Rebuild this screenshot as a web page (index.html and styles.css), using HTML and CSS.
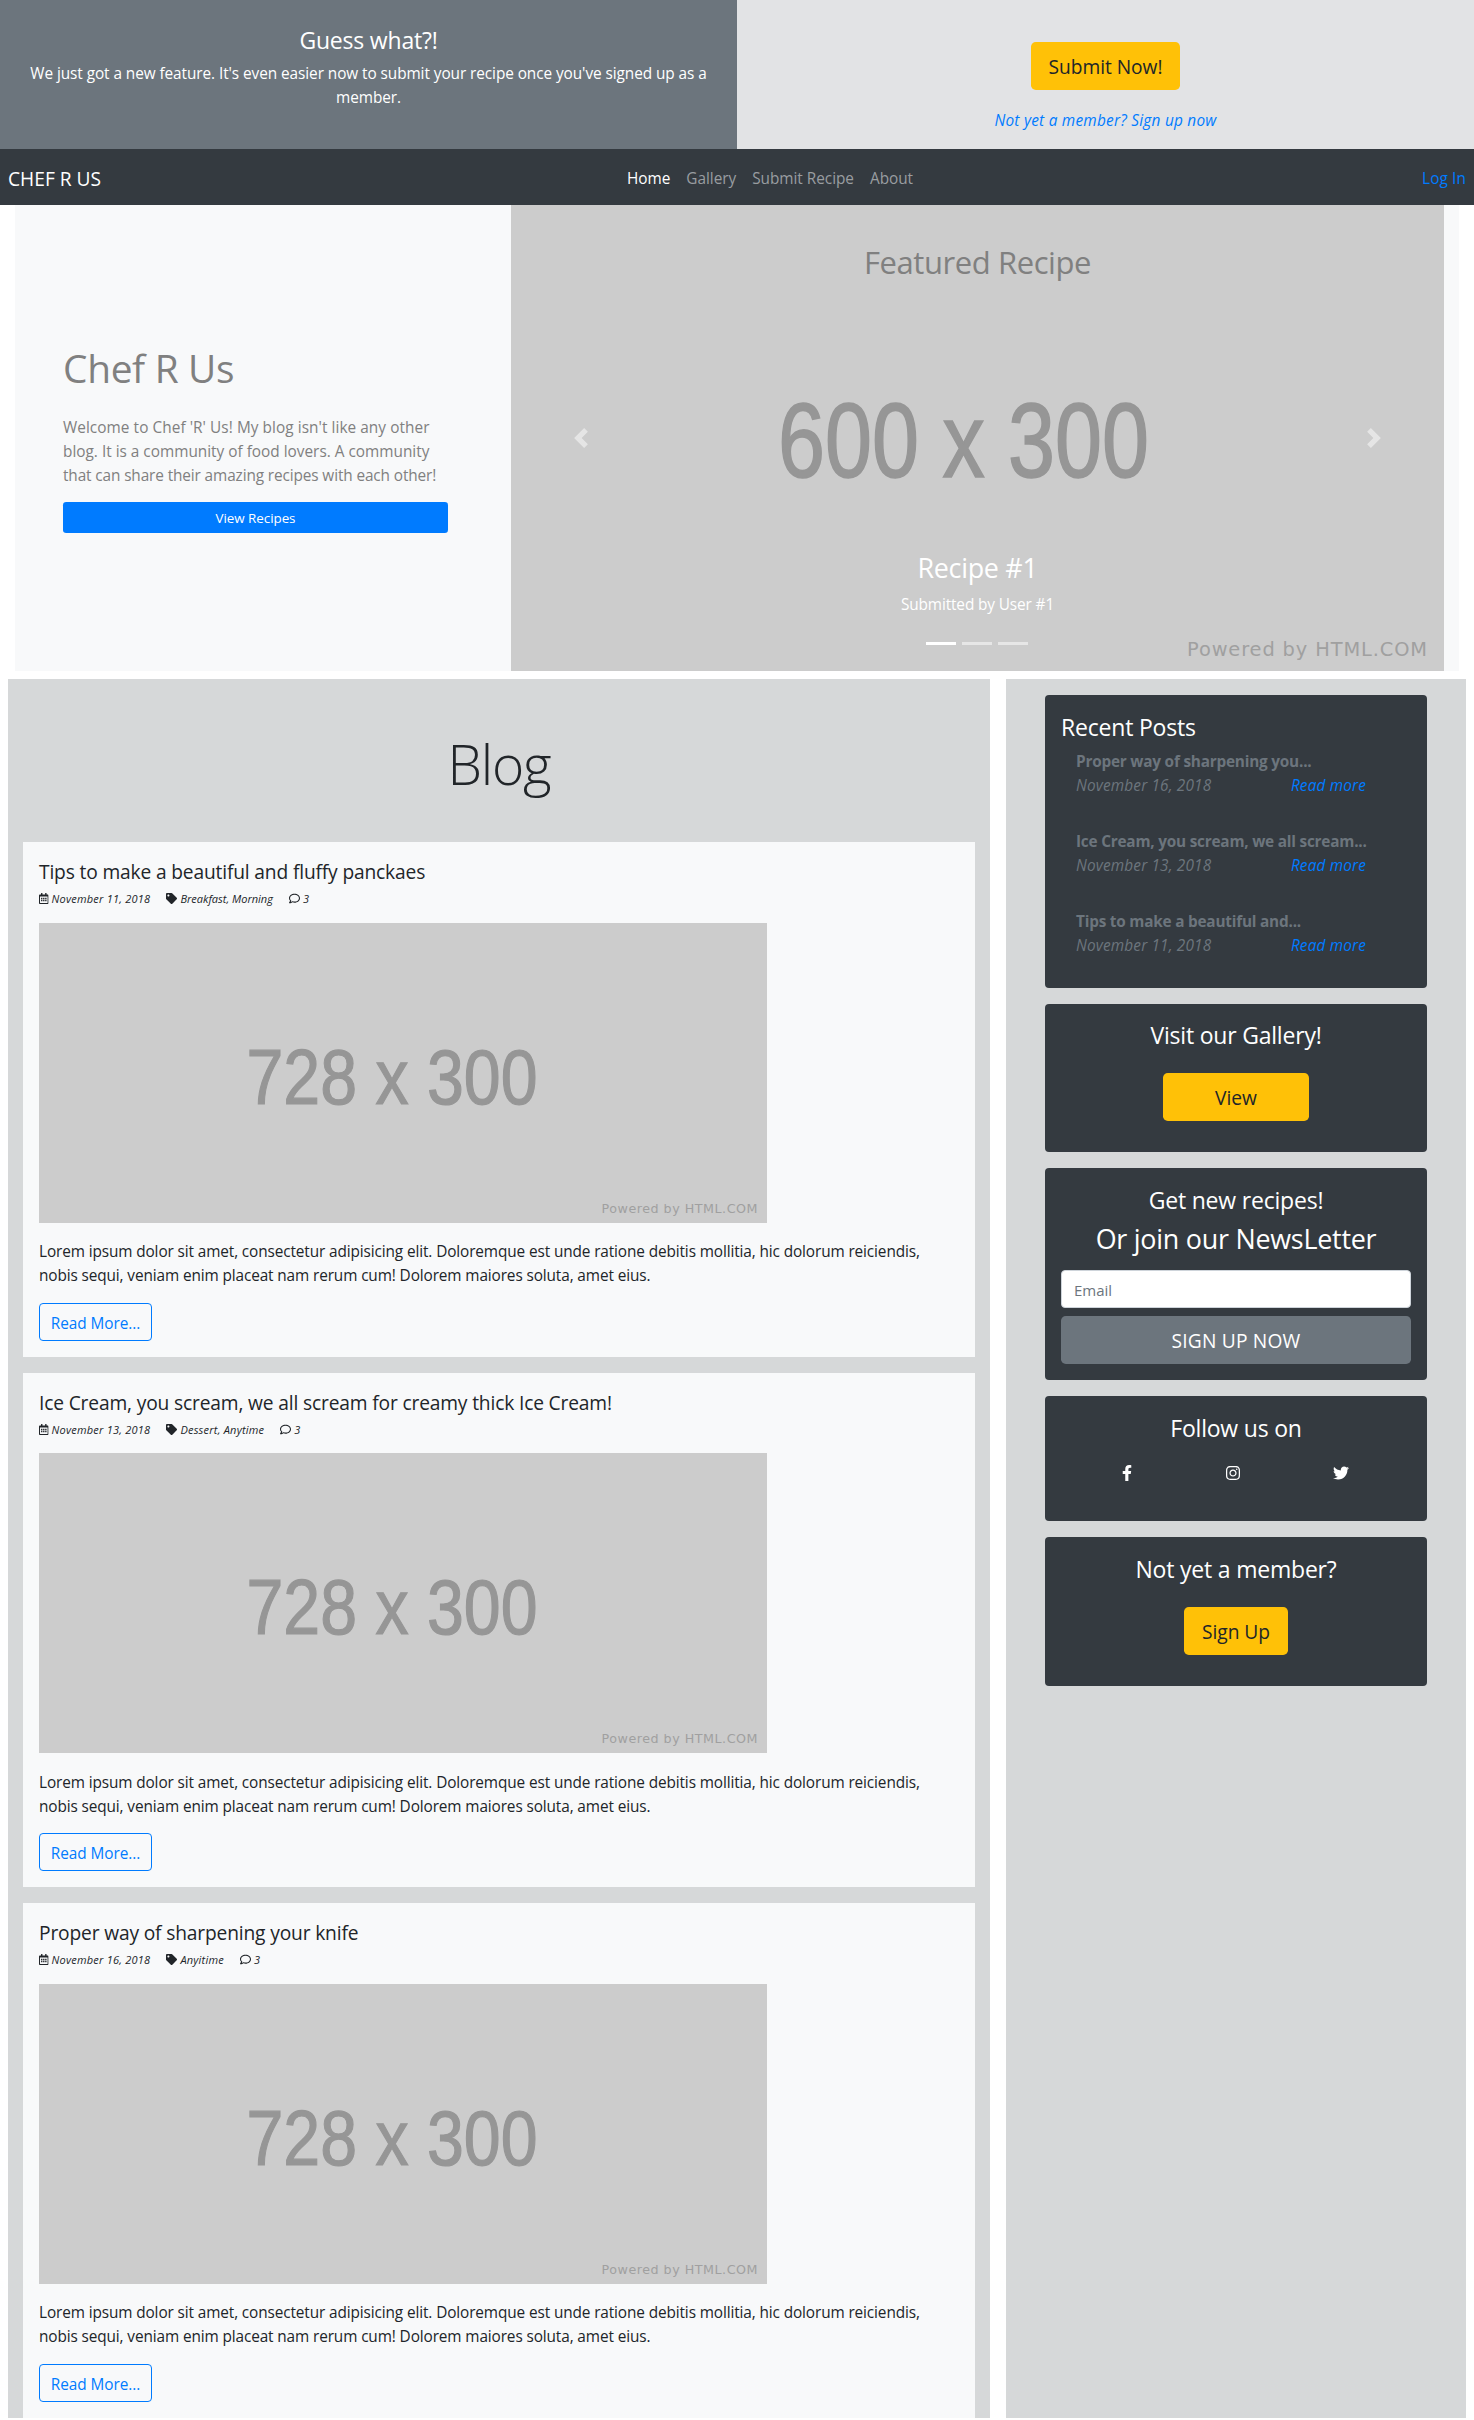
FILE: index.html
```
<!DOCTYPE html>
<html lang="en">
<head>
<meta charset="utf-8">
<title>Chef R Us</title>
<link rel="stylesheet" href="styles.css">
</head>
<body>
<svg class="sprite" aria-hidden="true">
  <symbol id="calendar" viewBox="0 0 448 512"><path d="M148 288h-40c-6.600 0-12-5.400-12-12v-40c0-6.600 5.400-12 12-12h40c6.600 0 12 5.400 12 12v40c0 6.600-5.400 12-12 12zm108-12v-40c0-6.600-5.400-12-12-12h-40c-6.600 0-12 5.400-12 12v40c0 6.600 5.400 12 12 12h40c6.600 0 12-5.400 12-12zm96 0v-40c0-6.600-5.400-12-12-12h-40c-6.600 0-12 5.400-12 12v40c0 6.600 5.400 12 12 12h40c6.600 0 12-5.400 12-12zm-96 96v-40c0-6.600-5.400-12-12-12h-40c-6.600 0-12 5.400-12 12v40c0 6.600 5.400 12 12 12h40c6.600 0 12-5.400 12-12zm-96 0v-40c0-6.600-5.400-12-12-12h-40c-6.600 0-12 5.400-12 12v40c0 6.600 5.400 12 12 12h40c6.600 0 12-5.400 12-12zm192 0v-40c0-6.600-5.400-12-12-12h-40c-6.600 0-12 5.400-12 12v40c0 6.600 5.400 12 12 12h40c6.600 0 12-5.400 12-12zm96-260v352c0 26.500-21.500 48-48 48H48c-26.500 0-48-21.500-48-48V112c0-26.500 21.500-48 48-48h48V12c0-6.600 5.400-12 12-12h40c6.600 0 12 5.400 12 12v52h128V12c0-6.600 5.400-12 12-12h40c6.600 0 12 5.400 12 12v52h48c26.500 0 48 21.500 48 48zm-48 346V160H48v298c0 3.300 2.700 6 6 6h340c3.300 0 6-2.700 6-6z"/></symbol>
  <symbol id="tag" viewBox="0 0 512 512"><path d="M0 252.118V48C0 21.490 21.490 0 48 0h204.118a48 48 0 0 1 33.941 14.059l211.882 211.882c18.745 18.745 18.745 49.137 0 67.882L293.823 497.941c-18.745 18.745-49.137 18.745-67.882 0L14.059 286.059A48 48 0 0 1 0 252.118zM112 64c-26.510 0-48 21.490-48 48s21.490 48 48 48 48-21.490 48-48-21.490-48-48-48z"/></symbol>
  <symbol id="comment" viewBox="0 0 512 512"><path d="M256 32C114.600 32 0 125.100 0 240c0 47.600 19.900 91.200 52.900 126.300C38 405.700 7 439.100 6.500 439.500c-6.600 7-8.400 17.200-4.600 26S14.400 480 24 480c61.500 0 110-25.700 139.100-46.300C192 442.800 223.200 448 256 448c141.400 0 256-93.100 256-208S397.400 32 256 32zm0 368c-26.700 0-53.100-4.100-78.400-12.100l-22.700-7.200-19.500 13.800c-14.300 10.100-33.900 21.400-57.500 29 7.300-12.100 14.400-25.700 19.900-40.200l10.600-28.100-20.600-21.800C69.700 314.100 48 282.200 48 240c0-88.200 93.300-160 208-160s208 71.800 208 160-93.300 160-208 160z"/></symbol>
  <symbol id="facebook" viewBox="0 0 320 512"><path d="M279.140 288l14.220-92.660h-88.910v-60.130c0-25.350 12.420-50.060 52.240-50.060h40.420V6.260S260.430 0 225.360 0c-73.220 0-121.080 44.380-121.080 124.720v70.620H22.890V288h81.390v224h100.170V288z"/></symbol>
  <symbol id="instagram" viewBox="0 0 448 512"><path d="M224.100 141c-63.600 0-114.900 51.300-114.900 114.900s51.300 114.900 114.900 114.900S339 319.500 339 255.900 287.700 141 224.100 141zm0 189.600c-41.100 0-74.700-33.500-74.700-74.700s33.500-74.700 74.700-74.700 74.700 33.500 74.700 74.700-33.600 74.700-74.700 74.700zm146.400-194.300c0 14.900-12 26.800-26.800 26.800-14.900 0-26.800-12-26.800-26.800s12-26.800 26.800-26.800 26.800 12 26.800 26.800zm76.100 27.200c-1.700-35.900-9.900-67.700-36.200-93.900-26.200-26.200-58-34.400-93.900-36.200-37-2.100-147.900-2.100-184.900 0-35.800 1.700-67.600 9.900-93.900 36.100s-34.400 58-36.200 93.900c-2.100 37-2.100 147.900 0 184.900 1.700 35.900 9.900 67.700 36.200 93.900s58 34.400 93.900 36.200c37 2.100 147.900 2.100 184.900 0 35.900-1.700 67.700-9.900 93.900-36.200 26.200-26.200 34.400-58 36.200-93.900 2.100-37 2.100-147.800 0-184.800zM398.800 388c-7.800 19.600-22.900 34.700-42.600 42.600-29.500 11.700-99.500 9-132.100 9s-102.700 2.600-132.100-9c-19.600-7.800-34.700-22.900-42.600-42.600-11.700-29.500-9-99.500-9-132.100s-2.600-102.700 9-132.100c7.800-19.600 22.900-34.700 42.600-42.600 29.500-11.700 99.500-9 132.100-9s102.700-2.600 132.100 9c19.600 7.800 34.700 22.900 42.600 42.600 11.700 29.500 9 99.500 9 132.100s2.700 102.700-9 132.100z"/></symbol>
  <symbol id="twitter" viewBox="0 0 512 512"><path d="M459.370 151.716c.325 4.548.325 9.097.325 13.645 0 138.720-105.583 298.558-298.558 298.558-59.452 0-114.680-17.219-161.137-47.106 8.447.974 16.568 1.299 25.340 1.299 49.055 0 94.213-16.568 130.274-44.832-46.132-.975-84.792-31.188-98.112-72.772 6.498.974 12.995 1.624 19.818 1.624 9.421 0 18.843-1.300 27.614-3.573-48.081-9.747-84.143-51.980-84.143-102.985v-1.299c13.969 7.797 30.214 12.670 47.431 13.319-28.264-18.843-46.781-51.005-46.781-87.391 0-19.492 5.197-37.360 14.294-52.954 51.655 63.675 129.300 105.258 216.365 109.807-1.624-7.797-2.599-15.918-2.599-24.040 0-57.828 46.782-104.934 104.934-104.934 30.213 0 57.502 12.670 76.670 33.137 23.715-4.548 46.456-13.320 66.599-25.340-7.798 24.366-24.366 44.833-46.132 57.827 21.117-2.273 41.584-8.122 60.426-16.243-14.292 20.791-32.161 39.308-52.628 54.253z"/></symbol>
  <symbol id="placeholder" viewBox="0 0 728 300">
    <rect width="728" height="300" fill="#ccc"/>
    <text x="207.500" y="181" textLength="291" lengthAdjust="spacingAndGlyphs" class="ph-size">728 x 300</text>
    <text x="562.500" y="290" textLength="156" lengthAdjust="spacing" class="ph-credit">Powered by HTML.COM</text>
  </symbol>
</svg>

<header class="announce">
  <div class="announce-news">
    <h4>Guess what?!</h4>
    <p>We just got a new feature. It's even easier now to submit your recipe once you've signed up as a member.</p>
  </div>
  <div class="announce-action">
    <a class="btn btn-warning submit-btn">Submit Now!</a>
    <a class="signup-link">Not yet a member? Sign up now</a>
  </div>
</header>

<nav class="navbar">
  <a class="brand">CHEF R US</a>
  <div class="nav-links">
    <a class="active">Home</a><a>Gallery</a><a>Submit Recipe</a><a>About</a>
  </div>
  <a class="login">Log In</a>
</nav>

<section class="hero">
  <div class="intro">
    <h1>Chef R Us</h1>
    <p><span class="loose">Welcome to Chef 'R' Us! My blog isn't like any other</span><br><span class="even">blog. It is a community of food lovers. A community</span><br>that can share their amazing recipes with each other!</p>
    <a class="btn btn-primary">View Recipes</a>
  </div>
  <div class="carousel">
    <svg class="slide" viewBox="0 0 933 466">
      <rect width="933" height="466" fill="#ccc"/>
      <text x="267" y="272" textLength="371" lengthAdjust="spacingAndGlyphs" class="ph-size ph-size-lg">600 x 300</text>
      <text x="676" y="450.500" textLength="240" lengthAdjust="spacing" class="ph-credit ph-credit-lg">Powered by HTML.COM</text>
    </svg>
    <h2 class="featured">Featured Recipe</h2>
    <svg class="arrow arrow-prev" viewBox="0 0 8 8"><path d="M5.250 0l-4 4 4 4 1.500-1.500-2.500-2.500 2.500-2.500-1.500-1.500z"/></svg>
    <svg class="arrow arrow-next" viewBox="0 0 8 8"><path d="M2.750 0l-1.500 1.500 2.500 2.500-2.500 2.500 1.500 1.500 4-4-4-4z"/></svg>
    <div class="caption">
      <h3>Recipe #1</h3>
      <p>Submitted by User #1</p>
    </div>
    <div class="indicators"><i class="on"></i><i></i><i></i></div>
  </div>
</section>

<div class="columns">
  <main class="blog">
    <h1 class="blog-title">Blog</h1>
    <article class="post">
      <h5>Tips to make a beautiful and fluffy panckaes</h5>
      <div class="meta"><span><svg class="cal"><use href="#calendar"/></svg>November 11, 2018</span><span class="tight"><svg><use href="#tag"/></svg>Breakfast, Morning</span><span><svg><use href="#comment"/></svg>3</span></div>
      <svg class="photo" viewBox="0 0 728 300"><use href="#placeholder"/></svg>
      <p>Lorem ipsum dolor sit amet, consectetur adipisicing elit. Doloremque est unde ratione debitis mollitia, hic dolorum reiciendis,<br>nobis sequi, veniam enim placeat nam rerum cum! Dolorem maiores soluta, amet eius.</p>
      <a class="btn btn-outline">Read More...</a>
    </article>
    <article class="post">
      <h5>Ice Cream, you scream, we all scream for creamy thick Ice Cream!</h5>
      <div class="meta"><span><svg class="cal"><use href="#calendar"/></svg>November 13, 2018</span><span><svg><use href="#tag"/></svg>Dessert, Anytime</span><span><svg><use href="#comment"/></svg>3</span></div>
      <svg class="photo" viewBox="0 0 728 300"><use href="#placeholder"/></svg>
      <p>Lorem ipsum dolor sit amet, consectetur adipisicing elit. Doloremque est unde ratione debitis mollitia, hic dolorum reiciendis,<br>nobis sequi, veniam enim placeat nam rerum cum! Dolorem maiores soluta, amet eius.</p>
      <a class="btn btn-outline">Read More...</a>
    </article>
    <article class="post">
      <h5>Proper way of sharpening your knife</h5>
      <div class="meta"><span><svg class="cal"><use href="#calendar"/></svg>November 16, 2018</span><span><svg><use href="#tag"/></svg>Anyitime</span><span><svg><use href="#comment"/></svg>3</span></div>
      <svg class="photo" viewBox="0 0 728 300"><use href="#placeholder"/></svg>
      <p>Lorem ipsum dolor sit amet, consectetur adipisicing elit. Doloremque est unde ratione debitis mollitia, hic dolorum reiciendis,<br>nobis sequi, veniam enim placeat nam rerum cum! Dolorem maiores soluta, amet eius.</p>
      <a class="btn btn-outline">Read More...</a>
    </article>
  </main>

  <aside class="sidebar">
    <section class="panel recent">
      <h4>Recent Posts</h4>
      <div class="recent-item"><b>Proper way of sharpening you...</b><div><em>November 16, 2018</em><a>Read more</a></div></div>
      <div class="recent-item"><b>Ice Cream, you scream, we all scream...</b><div><em>November 13, 2018</em><a>Read more</a></div></div>
      <div class="recent-item"><b>Tips to make a beautiful and...</b><div><em>November 11, 2018</em><a>Read more</a></div></div>
    </section>
    <section class="panel center cta">
      <h4>Visit our Gallery!</h4>
      <a class="btn btn-warning view-btn">View</a>
    </section>
    <section class="panel center newsletter">
      <h4>Get new recipes!</h4>
      <h3>Or join our NewsLetter</h3>
      <input type="email" placeholder="Email">
      <a class="btn btn-secondary">SIGN UP NOW</a>
    </section>
    <section class="panel center">
      <h4>Follow us on</h4>
      <div class="social">
        <svg class="fb"><use href="#facebook"/></svg>
        <svg class="ig"><use href="#instagram"/></svg>
        <svg><use href="#twitter"/></svg>
      </div>
    </section>
    <section class="panel center cta">
      <h4>Not yet a member?</h4>
      <a class="btn btn-warning join-btn">Sign Up</a>
    </section>
  </aside>
</div>
</body>
</html>
```
FILE: styles.css
```
* { box-sizing: border-box; }
body {
  margin: 0;
  background: #fff;
  color: #212529;
  font: 15.36px/24px "Open Sans", "Noto Sans", sans-serif;
  letter-spacing: -.115px;
}
h1, h2, h3, h4, h5, p { margin: 0; font-weight: 400; }
h3 { padding-top: 1px; font-size: 26.9px; line-height: 33.6px; letter-spacing: -.25px; }
h4 { padding-top: 1.500px; font-size: 23px; line-height: 28.8px; letter-spacing: -.2px; }
h5 { padding-top: 2px; font-size: 19.2px; line-height: 24px; letter-spacing: -.155px; }
p { padding-top: 1.500px; }
.sprite { position: absolute; width: 0; height: 0; }

.btn {
  display: block;
  border-radius: 4.8px;
  font-size: 19.2px;
  line-height: 50px;
  height: 48px;
  letter-spacing: -.04px;
  text-align: center;
}
.btn-warning { background: #ffc107; color: #212529; }
.btn-primary { background: #007bff; color: #fff; height: 31px; line-height: 32px; font-size: 13.4px; border-radius: 3.2px; }
.btn-secondary { background: #6c757d; color: #fff; letter-spacing: .2px; }
.btn-outline {
  width: 113px;
  height: 38px;
  line-height: 39px;
  border: 1px solid #007bff;
  border-radius: 4px;
  color: #007bff;
  font-size: 15.36px;
}

/* announcement strip */
.announce { display: grid; grid-template-columns: 1fr 1fr; height: 149px; text-align: center; }
.announce-news { background: #6c757d; color: #fff; padding: 24px 28px 0; }
.announce-news h4 { margin-bottom: 6.500px; }
.announce-news p { letter-spacing: -.07px; }
.announce-action { background: #e2e3e5; padding-top: 42px; display: flex; flex-direction: column; align-items: center; }
.submit-btn { width: 149px; }
.signup-link { margin-top: 18.500px; color: #007bff; font-style: italic; letter-spacing: .24px; }

/* navigation */
.navbar {
  display: flex;
  align-items: center;
  justify-content: space-between;
  height: 56px;
  padding: 3px 8px 0;
  background: #343a40;
}
.brand { width: 94px; margin-right: 16px; color: #fff; font-size: 19.2px; line-height: 28px; white-space: nowrap; letter-spacing: 0; }
.nav-links { display: flex; gap: 16px; color: #999da0; letter-spacing: -.03px; }
.nav-links .active { color: #fff; }
.login { color: #007bff; letter-spacing: 0.1px; }

/* hero */
.hero { display: flex; height: 466px; margin: 0 15px 8px; background: #f8f9fa; }
.intro { width: 496px; padding: 0 63px 0 48px; display: flex; flex-direction: column; justify-content: center; color: #808080; }
.intro h1 { padding-top: 1px; margin-bottom: 22.500px; font-size: 38.8px; line-height: 48px; letter-spacing: -.3px; }
.intro p { margin-bottom: 14.500px; white-space: nowrap; }
.loose { letter-spacing: .06px; }
.even { letter-spacing: 0; }
.carousel { position: relative; width: 933px; color: #fff; text-align: center; }
.slide { display: block; width: 933px; height: 466px; }
.ph-size { font: 77px "Liberation Sans", Arial, sans-serif; fill: #969696; stroke: #969696; stroke-width: 1.200; letter-spacing: 0; }
.ph-size-lg { font-size: 106px; stroke-width: 1.600; }
.ph-credit { font: 12.7px "DejaVu Sans", sans-serif; fill: #a0a0a0; letter-spacing: 0; }
.ph-credit-lg { font-size: 19.4px; }
.featured { position: absolute; top: 38px; left: 0; right: 0; color: #808080; font-size: 31px; line-height: 38px; letter-spacing: -.42px; }
.arrow { position: absolute; top: 223px; width: 20px; height: 20px; fill: #fff; opacity: .5; }
.arrow-prev { left: 60px; }
.arrow-next { right: 60px; }
.caption { position: absolute; left: 0; right: 0; bottom: 54px; }
.caption h3 { margin-bottom: 6.500px; letter-spacing: -.3px; }
.indicators { position: absolute; left: 0; right: 1px; bottom: 26px; display: flex; justify-content: center; gap: 6px; }
.indicators i { width: 30px; height: 3px; background: rgba(255, 255, 255, .5); }
.indicators .on { background: #fff; }

/* columns */
.columns { display: grid; grid-template-columns: 982px 460px; gap: 16px; margin: 0 8px; }
.blog { padding: 51px 15px 0; background: #d6d8d9; }
.blog-title { margin-bottom: 45px; font-size: 55px; font-weight: 300; line-height: 67px; letter-spacing: -1.200px; text-align: center; }
.post { padding: 16px; background: #f8f9fa; }
.post + .post { margin-top: 16px; }
.post h5 { margin-bottom: 6px; }
.meta { display: flex; gap: 16px; height: 16.5px; margin-bottom: 16px; font-size: 11px; line-height: 18px; font-style: italic; letter-spacing: .22px; }
.meta span { display: flex; gap: 3px; }
.meta .tight { letter-spacing: 0; }
.meta svg { width: 11px; height: 11px; margin-top: 3px; fill: #212529; }
.meta .cal { width: 9.6px; }
.photo { display: block; width: 728px; height: 300px; margin-bottom: 16px; }
.post p { margin-bottom: 14.500px; white-space: nowrap; }

/* sidebar */
.sidebar { display: flex; flex-direction: column; gap: 16px; padding: 16px 39px; background: #d6d8d9; }
.panel { padding: 16px; border-radius: 4px; background: #343a40; color: #fff; }
.panel h4 { margin-bottom: 6.500px; }
.center { text-align: center; }
.recent-item { width: 290px; padding-top: 2px; margin: 0 0 30px 15px; color: #6c757d; }
.recent-item b { display: block; letter-spacing: -.22px; white-space: nowrap; }
.recent-item div { display: flex; justify-content: space-between; font-style: italic; letter-spacing: .15px; }
.recent-item a { color: #007bff; }
.recent-item:last-child { margin-bottom: 14px; }
.cta { height: 148.300px; }
.cta .btn { margin: 23px auto 0; }
.view-btn { width: 146px; }
.join-btn { width: 104px; }
.newsletter h3 { margin-bottom: 15px; }
.newsletter input {
  display: block;
  width: 100%;
  height: 38px;
  margin-bottom: 8px;
  padding: 1px 12px 0;
  border: 1px solid #ced4da;
  border-radius: 4px;
  background: #fff;
  font: 15px "Open Sans", sans-serif;
}
.newsletter input::placeholder { color: #6c757d; opacity: 1; }
.social { display: flex; height: 56px; padding: 16px 62px 0 61px; justify-content: space-between; }
.social svg { width: 16px; height: 16px; fill: #fff; }
.social .fb { width: 10px; }
.social .ig { width: 14px; }
```
